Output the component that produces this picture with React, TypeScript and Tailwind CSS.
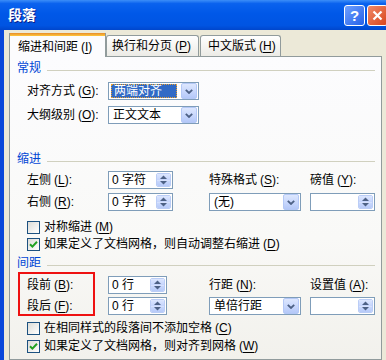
import type { ReactNode } from 'react'

function Key({ k }: { k: string }) {
  return (
    <span className="ml-[3px]">
      (<span className="underline underline-offset-2">{k}</span>)
    </span>
  )
}

function DropBtn() {
  return (
    <div className="flex h-[16px] w-[16px] shrink-0 items-center justify-center rounded-[2px] border border-[#B4C8F6] bg-[linear-gradient(180deg,#DDE7FE_0%,#C5D5FC_60%,#B4C8F8_100%)]">
      <svg width="8" height="5" viewBox="0 0 8 5">
        <path d="M0.8 0.8 L4 4 L7.2 0.8" stroke="#4D6185" strokeWidth="1.8" fill="none" />
      </svg>
    </div>
  )
}

function Select({ w, text, selected }: { w: string; text: string; selected?: boolean }) {
  return (
    <div className={`flex h-[18px] items-center border border-[#7F9DB9] bg-white p-px ${w}`}>
      <div className="flex min-w-0 flex-1 items-center pl-px">
        {selected ? (
          <span className="border border-dotted border-[#E8A030] bg-[#316AC5] pl-[2px] pr-[14px] leading-[12px] text-white">
            {text}
          </span>
        ) : (
          <span className="pl-[2px] leading-[14px]">{text}</span>
        )}
      </div>
      <DropBtn />
    </div>
  )
}

function Arrow({ up }: { up?: boolean }) {
  return (
    <svg width="7" height="4" viewBox="0 0 7 4">
      <path d={up ? 'M0 4 L3.5 0.5 L7 4 Z' : 'M0 0 L3.5 3.5 L7 0 Z'} fill="#4D6185" />
    </svg>
  )
}

function Spin({ w, text }: { w: string; text: string }) {
  return (
    <div className={`flex h-[18px] items-stretch border border-[#7F9DB9] bg-white p-px ${w}`}>
      <span className="flex-1 pl-[2px] leading-[14px]">{text}</span>
      <div className="flex w-[15px] flex-col overflow-hidden rounded-[2px] border border-[#BBCDF6]">
        <div className="flex flex-1 items-center justify-center bg-[linear-gradient(180deg,#DCE6FE,#C4D4FC)]">
          <Arrow up />
        </div>
        <div className="flex flex-1 items-center justify-center border-t border-[#D6E1FD] bg-[linear-gradient(180deg,#C8D7FC,#B6CAF8)]">
          <Arrow />
        </div>
      </div>
    </div>
  )
}

function Check({ checked, children }: { checked?: boolean; children: ReactNode }) {
  return (
    <div className="flex h-[16px] items-center pl-[17px]">
      <div className="flex h-[13px] w-[13px] items-center justify-center border border-[#1C5180] bg-[linear-gradient(135deg,#DCDCD7,#FFFFFF)]">
        {checked && (
          <svg width="9" height="9" viewBox="0 0 9 9">
            <path d="M1 4.2 L3.4 6.6 L8 1.8" stroke="#21A121" strokeWidth="2" fill="none" />
          </svg>
        )}
      </div>
      <span className="ml-[4px] leading-[14px]">{children}</span>
    </div>
  )
}

function Header({ title, className }: { title: string; className: string }) {
  return (
    <div className={`flex h-[14px] items-center pl-[7px] pr-[6px] ${className}`}>
      <span className="leading-[14px] text-[#0046D5]">{title}</span>
      <div className="ml-[6px] mt-[4px] h-px flex-1 bg-[#D0D0BF]" />
    </div>
  )
}

export default function App() {
  return (
    <div className="flex h-[360px] w-[386px] flex-col overflow-hidden bg-[#ECE9D8] font-['Liberation_Sans','Noto_Sans_CJK_SC',sans-serif] text-[12px] text-black">
      {/* title bar */}
      <div className="flex h-[30px] shrink-0 items-center bg-[linear-gradient(180deg,#3C8EF8_0%,#0A62EE_12%,#0058E8_45%,#0054E2_85%,#0046CC_100%)] pl-[8px]">
        <span className="text-[14px] font-bold text-white [text-shadow:1px_1px_0_#0A1E8A]">段落</span>
        <div className="ml-auto flex items-center gap-[2px]">
          <div className="flex h-[21px] w-[21px] items-center justify-center rounded-[3px] border border-white bg-[linear-gradient(135deg,#6FA0FF,#2561E8)] text-[15px] font-bold leading-none text-white">
            ?
          </div>
          <div className="-mr-[2px] flex h-[21px] w-[21px] items-center justify-center rounded-[3px] border border-white bg-[linear-gradient(135deg,#F08A68,#D8441C)]">
            <svg width="11" height="11" viewBox="0 0 11 11">
              <path d="M1.5 1.5 L9.5 9.5 M9.5 1.5 L1.5 9.5" stroke="#fff" strokeWidth="2.2" />
            </svg>
          </div>
        </div>
      </div>

      {/* body */}
      <div className="flex flex-1 flex-col border-l-4 border-[#0A48DA] pl-[5px] pt-[3px]">
        {/* tabs */}
        <div className="flex h-[23px] items-start">
          <div className="relative z-10 flex h-[24px] w-[97px] flex-col border-x border-[#919B9C] bg-[#FCFCFE]">
            <div className="h-[3px] bg-[linear-gradient(180deg,#E68B2C,#FFC73C)]" />
            <div className="flex flex-1 items-center pl-[8px] leading-[14px]">
              缩进和间距<Key k="I" />
            </div>
          </div>
          <div className="mt-[2px] flex h-[21px] w-[93px] items-center rounded-t-[3px] border border-b-0 border-[#919B9C] bg-[linear-gradient(180deg,#FFFFFF,#ECEBE6)] pl-[5px]">
            换行和分页<Key k="P" />
          </div>
          <div className="ml-[1px] mt-[2px] flex h-[21px] w-[81px] items-center rounded-t-[3px] border border-b-0 border-[#919B9C] bg-[linear-gradient(180deg,#FFFFFF,#ECEBE6)] pl-[7px]">
            中文版式<Key k="H" />
          </div>
        </div>

        {/* panel */}
        <div className="flex w-[373px] flex-1 flex-col border border-[#919B9C] bg-[linear-gradient(180deg,#FCFCFE_0%,#F9F9F7_60%,#F2F1EC_100%)]">
          <Header title="常规" className="mt-[4px]" />
          <div className="mt-[7px] flex items-center pl-[17px]">
            <span className="w-[81px]">
              对齐方式<Key k="G" />:
            </span>
            <Select w="w-[91px]" text="两端对齐" selected />
          </div>
          <div className="mt-[6px] flex items-center pl-[17px]">
            <span className="w-[81px]">
              大纲级别<Key k="O" />:
            </span>
            <Select w="w-[91px]" text="正文文本" />
          </div>

          <Header title="缩进" className="mt-[28px]" />
          <div className="mt-[5px] grid grid-cols-[81px_101px_101px_65px] grid-rows-[18px_18px] gap-y-[4px] pl-[17px]">
            <span className="self-center">
              左侧<Key k="L" />:
            </span>
            <Spin w="w-[65px]" text="0 字符" />
            <span className="self-center">
              特殊格式<Key k="S" />:
            </span>
            <span className="self-center">
              磅值<Key k="Y" />:
            </span>
            <span className="self-center">
              右侧<Key k="R" />:
            </span>
            <Spin w="w-[65px]" text="0 字符" />
            <Select w="w-[92px]" text="(无)" />
            <Spin w="w-[65px]" text="" />
          </div>
          <div className="mt-[8px]">
            <Check>
              对称缩进<Key k="M" />
            </Check>
          </div>
          <div className="mt-[1px]">
            <Check checked>
              如果定义了文档网格，则自动调整右缩进<Key k="D" />
            </Check>
          </div>

          <Header title="间距" className="mt-[4px]" />
          <div className="relative mt-[6px] ml-[17px] grid grid-cols-[81px_101px_101px_65px] grid-rows-[18px_18px] gap-y-[3px]">
            <div className="pointer-events-none absolute left-[-9px] top-[-4px] h-[44px] w-[77px] border-2 border-[#EE1111]" />
            <span className="self-center">
              段前<Key k="B" />:
            </span>
            <Spin w="w-[59px]" text="0 行" />
            <span className="self-center">
              行距<Key k="N" />:
            </span>
            <span className="self-center">
              设置值<Key k="A" />:
            </span>
            <span className="self-center">
              段后<Key k="F" />:
            </span>
            <Spin w="w-[59px]" text="0 行" />
            <Select w="w-[92px]" text="单倍行距" />
            <Spin w="w-[65px]" text="" />
          </div>
          <div className="mt-[5px]">
            <Check>
              在相同样式的段落间不添加空格<Key k="C" />
            </Check>
          </div>
          <div className="mt-[2px]">
            <Check checked>
              如果定义了文档网格，则对齐到网格<Key k="W" />
            </Check>
          </div>
        </div>
      </div>
    </div>
  )
}
